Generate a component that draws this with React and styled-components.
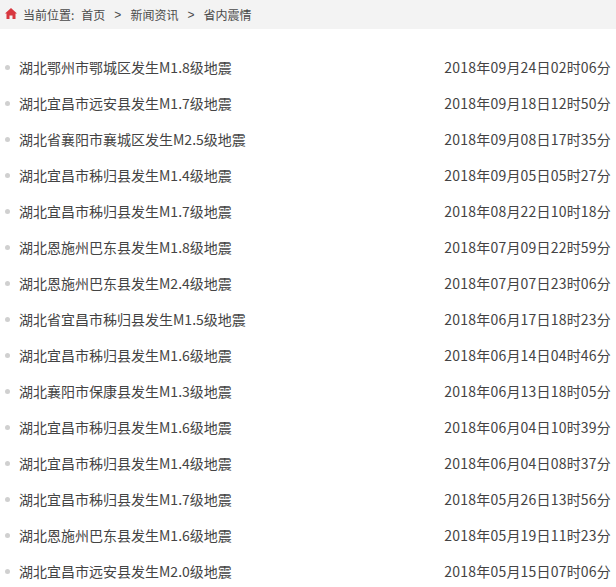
import React from "react";
import styled, { createGlobalStyle } from "styled-components";

const GlobalStyle = createGlobalStyle`
  body {
    margin: 0;
    background: #fff;
    font-family: "Microsoft YaHei", "Noto Sans CJK SC", sans-serif;
  }
`;

const Page = styled.div`
  width: 616px;
  height: 587px;
  overflow: hidden;
  background: #fff;
`;

const Crumbs = styled.div`
  height: 29px;
  background: #f3f3f3;
  display: flex;
  align-items: center;
  padding-left: 5px;
  font-size: 12px;
  color: #4a4a4a;
`;

const Label = styled.span`
  margin-right: 7px;
`;

const Sep = styled.span`
  margin: 0 9px;
  font-family: "Liberation Sans", sans-serif;
`;

const HomeIcon = styled.svg`
  width: 12px;
  height: 11px;
  margin-right: 6px;
  margin-top: -2px;
`;

const List = styled.ul`
  list-style: none;
  margin: 0;
  padding: 20px 0 0 0;
`;

const Row = styled.li`
  height: 36px;
  display: flex;
  align-items: center;
  font-size: 14px;
  color: #444;
  padding-right: 5px;
`;

const Dot = styled.span`
  width: 5px;
  height: 5px;
  border-radius: 50%;
  background: #d0d0d0;
  margin: 0 9px 0 5px;
  flex: none;
`;

const Title = styled.span`
  flex: 1;
`;

const Time = styled.span`
  flex: none;
  letter-spacing: 0.2px;
`;

const rows = [
  ["湖北鄂州市鄂城区发生M1.8级地震", "2018年09月24日02时06分"],
  ["湖北宜昌市远安县发生M1.7级地震", "2018年09月18日12时50分"],
  ["湖北省襄阳市襄城区发生M2.5级地震", "2018年09月08日17时35分"],
  ["湖北宜昌市秭归县发生M1.4级地震", "2018年09月05日05时27分"],
  ["湖北宜昌市秭归县发生M1.7级地震", "2018年08月22日10时18分"],
  ["湖北恩施州巴东县发生M1.8级地震", "2018年07月09日22时59分"],
  ["湖北恩施州巴东县发生M2.4级地震", "2018年07月07日23时06分"],
  ["湖北省宜昌市秭归县发生M1.5级地震", "2018年06月17日18时23分"],
  ["湖北宜昌市秭归县发生M1.6级地震", "2018年06月14日04时46分"],
  ["湖北襄阳市保康县发生M1.3级地震", "2018年06月13日18时05分"],
  ["湖北宜昌市秭归县发生M1.6级地震", "2018年06月04日10时39分"],
  ["湖北宜昌市秭归县发生M1.4级地震", "2018年06月04日08时37分"],
  ["湖北宜昌市秭归县发生M1.7级地震", "2018年05月26日13时56分"],
  ["湖北恩施州巴东县发生M1.6级地震", "2018年05月19日11时23分"],
  ["湖北宜昌市远安县发生M2.0级地震", "2018年05月15日07时06分"],
];

export default function App() {
  return (
    <Page>
      <GlobalStyle />
      <Crumbs>
        <HomeIcon viewBox="0 0 12 11">
          <path d="M6 0 L12 5.5 L10.5 5.5 L10.5 11 L7.5 11 L7.5 7.5 L4.5 7.5 L4.5 11 L1.5 11 L1.5 5.5 L0 5.5 Z" fill="#d8373f" />
        </HomeIcon>
        <Label>当前位置:</Label>首页<Sep>&gt;</Sep>新闻资讯<Sep>&gt;</Sep>省内震情
      </Crumbs>
      <List>
        {rows.map(([t, d], i) => (
          <Row key={i}>
            <Dot />
            <Title>{t}</Title>
            <Time>{d}</Time>
          </Row>
        ))}
      </List>
    </Page>
  );
}
